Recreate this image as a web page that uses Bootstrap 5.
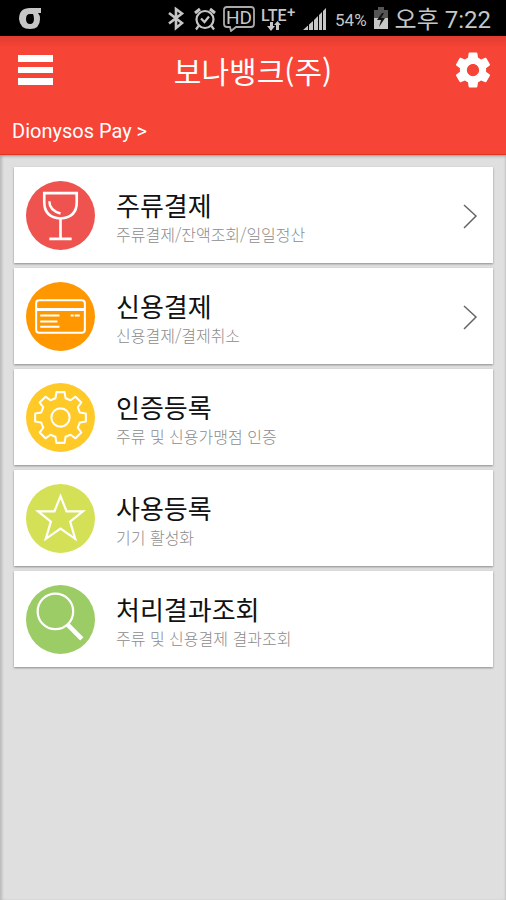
<!DOCTYPE html>
<html lang="ko">
<head>
<meta charset="utf-8">
<meta name="viewport" content="width=device-width, initial-scale=1">
<title>보나뱅크(주)</title>
<link rel="stylesheet" href="https://cdn.jsdelivr.net/npm/bootstrap@5.3.0/dist/css/bootstrap.min.css">
<style>
body { background: #dfdfdf; font-family: Roboto, "Noto Sans CJK KR", sans-serif; }
svg { display: block; flex: none; }
.status-bar { height: 36px; background: #000; color: #c6c6c6; gap: 6px; padding: 0 15px 0 18px; }
.status-bar .percent { font-size: 17px; line-height: 20px; padding: 3px 0 0 2px; }
.status-bar .clock { font-size: 24px; line-height: 34px; padding-top: 3px; }
.app-head { background: linear-gradient(#e23c31, #f64436 12px); border-bottom: 1px solid #dc3520; box-shadow: 0 1px 3px rgba(0,0,0,.3); }
.app-head .top-row { height: 68px; padding: 0 12px 0 18px; }
.app-head h1 { font-family: "Noto Sans CJK KR", sans-serif; font-size: 30px; line-height: 40px; font-weight: 400; }
.pay-link { font-size: 20px; line-height: 24px; padding: 15px 12px 11px; }
.page-body { min-height: calc(100vh - 155px); padding: 12px 13px 20px 14px; box-shadow: inset 3px 0 3px -1px #b9b9b9, inset -2px 0 2px -1px #c4c4c4; }
.menu-list { gap: 5px; }
.menu-card { min-height: 96px; background: #fff; color: #111; padding: 1px 13px 0 12px; box-shadow: 0 1px 2px #8c8c8c; font-family: "Noto Sans CJK KR", sans-serif; }
.menu-text { padding: 4px 0 0 21px; }
.menu-title { font-size: 26px; line-height: 32px; font-weight: 400; }
.menu-note { font-size: 16px; line-height: 26px; font-weight: 300; color: #8c8c8c; }
</style>
<script src="https://cdn.jsdelivr.net/npm/bootstrap@5.3.0/dist/js/bootstrap.bundle.min.js"></script>
</head>
<body>
<div class="status-bar d-flex align-items-center">
  <svg class="me-auto" width="24" height="24" viewBox="0 0 24 24" aria-hidden="true"><path d="M23 2v5h-3q2 2 2 6 0 10-10 10T1 13Q1 2 12 2z" fill="#c6c6c6"/><path d="M15 8h-3q-4 0-4 5t4 5 4-5q0-3-1-5z" fill="#000"/></svg>
  <svg width="20" height="26" viewBox="0 0 20 26" fill="none" stroke="#c6c6c6" stroke-width="2.600" aria-hidden="true"><path d="M2 8l13 10-6 5V4l6 4.500L2 18.500"/></svg>
  <svg width="24" height="26" viewBox="0 0 24 26" fill="none" stroke="#c6c6c6" stroke-width="2.200" aria-hidden="true"><circle cx="12" cy="14.500" r="8.500"/><path d="M8 13.500l3.500 3.500 4.500-5.500M5.500 21 3 24.500M18.500 21 21 24.500"/><path d="M2 8 7 4M22 8 17 4" stroke-width="3"/></svg>
  <svg width="32" height="28" viewBox="0 0 32 28" aria-hidden="true"><path d="M4 3h24q3 0 3 3v14q0 3-3 3H13l-5 4-1-4H4q-3 0-3-3V6q0-3 3-3z" fill="none" stroke="#aaa" stroke-width="1.800"/><text x="3" y="20" font-family="Roboto, sans-serif" font-size="19" fill="#c6c6c6">HD</text></svg>
  <svg width="36" height="28" viewBox="0 0 36 28" aria-hidden="true"><g fill="#c6c6c6" font-family="Roboto, sans-serif" font-weight="500"><text x="0" y="17" font-size="16">LTE</text><text x="26" y="13" font-size="15">+</text></g><path d="M6 22h3v-4h3v4h2l-4 5zM13 21l3.500-4 3.500 4h-2v5h-3v-5z" fill="#c6c6c6"/></svg>
  <svg width="24" height="24" viewBox="0 0 24 24" aria-hidden="true"><path d="M0 24 5 19.500V24zM6 18.500l4-3.500v9H6zM11 14l4-4v14h-4zM16 9l3-3v18h-3zM20 5l3-3v22h-3z" fill="#c6c6c6"/></svg>
  <span class="percent">54%</span>
  <svg width="16" height="24" viewBox="0 0 16 24" aria-hidden="true"><path d="M5 1h6v3h4v19H1V4h4z" fill="#555"/><path d="M1 12h14v11H1z" fill="#c6c6c6"/><path d="M9 7 4 14h4l-2 7 6-9H8l3-5z" fill="#111"/></svg>
  <span class="clock text-nowrap">오후 7:22</span>
</div>

<header class="app-head position-relative">
  <div class="top-row d-flex align-items-center justify-content-between">
    <button type="button" class="btn p-0 border-0" aria-label="메뉴"><svg width="36" height="32" viewBox="0 0 36 32" fill="#fff"><path d="M0 1h35v7H0zM0 13h35v6H0zM0 24h35v7H0z"/></svg></button>
    <h1 class="text-white mb-0">보나뱅크(주)</h1>
    <button type="button" class="btn p-0 border-0" aria-label="설정"><svg width="42" height="42" viewBox="0 0 24 24" fill="#fff"><path d="M19.430 12.980c.04-.32.07-.64.07-.98s-.03-.66-.07-.98l2.110-1.650c.19-.15.24-.42.12-.64l-2-3.460c-.12-.22-.39-.3-.61-.22l-2.490 1c-.52-.4-1.080-.73-1.690-.98l-.38-2.650C14.460 2.180 14.250 2 14 2h-4c-.25 0-.46.18-.49.42l-.38 2.650c-.61.25-1.170.59-1.690.98l-2.490-1c-.23-.09-.49 0-.61.22l-2 3.460c-.13.22-.07.49.12.64l2.110 1.650c-.04.32-.07.65-.07.98s.03.66.07.98l-2.110 1.650c-.19.15-.24.42-.12.64l2 3.460c.12.22.39.3.61.22l2.490-1c.52.4 1.080.73 1.690.98l.38 2.650c.03.24.24.42.49.42h4c.25 0 .46-.18.49-.42l.38-2.650c.61-.25 1.170-.59 1.690-.98l2.490 1c.23.09.49 0 .61-.22l2-3.460c.12-.22.07-.49-.12-.64l-2.110-1.650zM12 15.500c-1.930 0-3.500-1.570-3.500-3.500s1.570-3.500 3.500-3.500 3.500 1.570 3.500 3.500-1.570 3.500-3.500 3.500z"/></svg></button>
  </div>
  <a href="#" class="pay-link d-inline-block text-white text-decoration-none">Dionysos Pay &gt;</a>
</header>

<main class="page-body">
  <nav class="menu-list d-flex flex-column" aria-label="메뉴">
    <a href="#" class="menu-card d-flex align-items-center text-decoration-none">
      <svg width="69" height="69" viewBox="-34 -34 68 68" fill="none" stroke="#fff" stroke-width="2.600" aria-hidden="true"><circle r="34" fill="#ef5350" stroke="none"/><path d="M-16-22h32v9q0 15-16 16-16-1-16-16zM0 3v20M-11 23h22"/><path d="M-11-14q0 9 11 12" stroke-width="2.400"/></svg>
      <span class="menu-text flex-grow-1"><span class="menu-title d-block">주류결제</span><span class="menu-note d-block">주류결제/잔액조회/일일정산</span></span>
      <svg width="18" height="28" viewBox="0 0 18 28" fill="none" stroke="#666" stroke-width="1.500" aria-hidden="true"><path d="M2 3l12 11L2 26"/></svg>
    </a>
    <a href="#" class="menu-card d-flex align-items-center text-decoration-none">
      <svg width="69" height="69" viewBox="-34 -34 68 68" fill="none" stroke="#fff" stroke-width="2" aria-hidden="true"><circle r="34" fill="#ff9800" stroke="none"/><rect x="-24" y="-16" width="48" height="32" rx="3"/><path d="M-24-7h48" stroke-width="3"/><path d="M-20-1h19M-20 5h17M-20 10h19M10-1h3M14-1h5"/></svg>
      <span class="menu-text flex-grow-1"><span class="menu-title d-block">신용결제</span><span class="menu-note d-block">신용결제/결제취소</span></span>
      <svg width="18" height="28" viewBox="0 0 18 28" fill="none" stroke="#666" stroke-width="1.500" aria-hidden="true"><path d="M2 3l12 11L2 26"/></svg>
    </a>
    <a href="#" class="menu-card d-flex align-items-center text-decoration-none">
      <svg width="69" height="69" viewBox="-34 -34 68 68" fill="none" stroke="#fff" stroke-width="2" stroke-linejoin="round" aria-hidden="true"><circle r="34" fill="#ffca28" stroke="none"/><path d="M-4-25H4L5-19 9.900-17 14.800-20.500 20.500-14.800 17-9.900 19-5 25-4V4L19 5 17 9.900 20.500 14.800 14.800 20.500 9.900 17 5 19 4 25H-4L-5 19-9.900 17-14.800 20.500-20.500 14.800-17 9.900-19 5-25 4V-4L-19-5-17-9.900-20.500-14.800-14.800-20.500-9.900-17-5-19z"/><circle r="9"/></svg>
      <span class="menu-text flex-grow-1"><span class="menu-title d-block">인증등록</span><span class="menu-note d-block">주류 및 신용가맹점 인증</span></span>
    </a>
    <a href="#" class="menu-card d-flex align-items-center text-decoration-none">
      <svg width="69" height="69" viewBox="-34 -34 68 68" fill="none" stroke="#fff" stroke-width="2.200" aria-hidden="true"><circle r="34" fill="#d4e157" stroke="none"/><path d="M0-22 6-7H22L9.500 3 14.500 20 0 10-14.500 20-9.500 3-22-7H-6z"/></svg>
      <span class="menu-text flex-grow-1"><span class="menu-title d-block">사용등록</span><span class="menu-note d-block">기기 활성화</span></span>
    </a>
    <a href="#" class="menu-card d-flex align-items-center text-decoration-none">
      <svg width="69" height="69" viewBox="-34 -34 68 68" fill="none" stroke="#fff" stroke-width="2.200" aria-hidden="true"><circle r="34" fill="#9ccc65" stroke="none"/><circle cx="-5" cy="-8" r="17.500"/><path d="M7 5 21 19" stroke-width="4.500"/></svg>
      <span class="menu-text flex-grow-1"><span class="menu-title d-block">처리결과조회</span><span class="menu-note d-block">주류 및 신용결제 결과조회</span></span>
    </a>
  </nav>
</main>
</body>
</html>
